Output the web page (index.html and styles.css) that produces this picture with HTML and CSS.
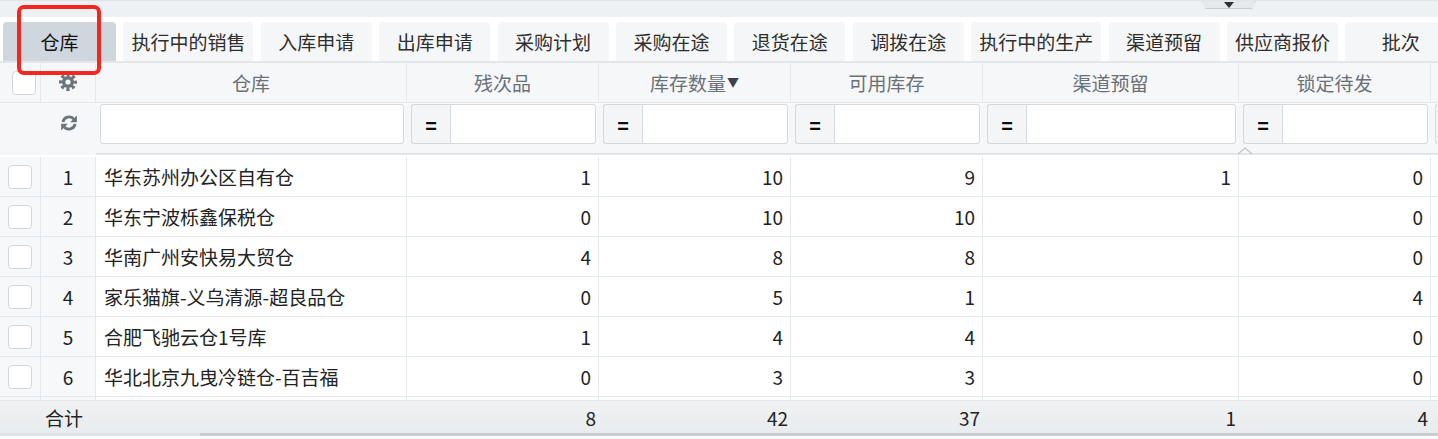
FILE: index.html
```html
<!DOCTYPE html>
<html lang="zh-CN">
<head>
    <meta charset="UTF-8">
    <meta name="viewport" content="width=device-width, initial-scale=1.0">
    <title>库存查询</title>
    <link rel="stylesheet" href="styles.css">
</head>
<body>
    <div class="topbar">
        <span class="drawer-handle">
            <svg width="10" height="6" viewBox="0 0 10 6"><path d="M0 0h10L5 6z" fill="#2b3036"/></svg>
        </span>
    </div>

    <div class="tabs">
        <div class="tab active">仓库</div>
        <div class="tab">执行中的销售</div>
        <div class="tab">入库申请</div>
        <div class="tab">出库申请</div>
        <div class="tab">采购计划</div>
        <div class="tab">采购在途</div>
        <div class="tab">退货在途</div>
        <div class="tab">调拨在途</div>
        <div class="tab">执行中的生产</div>
        <div class="tab">渠道预留</div>
        <div class="tab">供应商报价</div>
        <div class="tab">批次</div>
    </div>
    <!-- highlight box drawn over the first tab -->
    <div class="mark"></div>

    <div class="grid">
        <div class="row head">
            <div class="cell sel"><span class="check"></span></div>
            <div class="cell idx">
                <svg class="icon" width="18" height="18" viewBox="0 0 18 18">
                    <circle cx="9" cy="9" r="7.2" fill="none" stroke="#6b757d" stroke-width="3.6" stroke-dasharray="3.1 2.55" stroke-dashoffset="1.55"/>
                    <circle cx="9" cy="9" r="6.1" fill="#6b757d"/>
                    <circle cx="9" cy="9" r="2.6" fill="#f5f7f8"/>
                </svg>
            </div>
            <div class="cell">仓库</div>
            <div class="cell">残次品</div>
            <div class="cell">库存数量<span class="sort">▼</span></div>
            <div class="cell">可用库存</div>
            <div class="cell">渠道预留</div>
            <div class="cell">锁定待发</div>
            <div class="cell last"></div>
        </div>

        <div class="row filter">
            <div class="cell sel"></div>
            <div class="cell idx">
                <svg class="icon" width="18" height="18" viewBox="0 0 16 16">
                    <path d="M2.6 7.2A5.6 5.6 0 0 1 12.4 4.6" fill="none" stroke="#6b757d" stroke-width="2.6"/>
                    <path d="M15 1.4V7.4H9z" fill="#6b757d"/>
                    <path d="M13.4 8.8A5.6 5.6 0 0 1 3.6 11.4" fill="none" stroke="#6b757d" stroke-width="2.6"/>
                    <path d="M1 14.6V8.6H7z" fill="#6b757d"/>
                </svg>
            </div>
            <div class="cell"><input class="field solo" type="text"></div>
            <div class="cell"><div class="group"><span class="op">=</span><input class="field" type="text"></div></div>
            <div class="cell"><div class="group"><span class="op">=</span><input class="field" type="text"></div></div>
            <div class="cell"><div class="group"><span class="op">=</span><input class="field" type="text"></div></div>
            <div class="cell"><div class="group"><span class="op">=</span><input class="field" type="text"></div></div>
            <div class="cell"><div class="group"><span class="op">=</span><input class="field" type="text"></div></div>
            <div class="cell last"><div class="group"><span class="op"></span></div></div>
            <svg class="resize-tip" width="16" height="8" viewBox="0 0 16 8"><path d="M1 7L8 1l7 6" fill="none" stroke="#c5ccd2" stroke-width="1.5"/></svg>
        </div>

        <div class="body">
            <div class="row">
                <div class="cell sel"><span class="check"></span></div>
                <div class="cell idx">1</div>
                <div class="cell name">华东苏州办公区自有仓</div>
                <div class="cell num">1</div>
                <div class="cell num">10</div>
                <div class="cell num">9</div>
                <div class="cell num">1</div>
                <div class="cell num">0</div>
                <div class="cell last"></div>
            </div>
            <div class="row">
                <div class="cell sel"><span class="check"></span></div>
                <div class="cell idx">2</div>
                <div class="cell name">华东宁波栎鑫保税仓</div>
                <div class="cell num">0</div>
                <div class="cell num">10</div>
                <div class="cell num">10</div>
                <div class="cell num"></div>
                <div class="cell num">0</div>
                <div class="cell last"></div>
            </div>
            <div class="row">
                <div class="cell sel"><span class="check"></span></div>
                <div class="cell idx">3</div>
                <div class="cell name">华南广州安快易大贸仓</div>
                <div class="cell num">4</div>
                <div class="cell num">8</div>
                <div class="cell num">8</div>
                <div class="cell num"></div>
                <div class="cell num">0</div>
                <div class="cell last"></div>
            </div>
            <div class="row">
                <div class="cell sel"><span class="check"></span></div>
                <div class="cell idx">4</div>
                <div class="cell name">家乐猫旗-义乌清源-超良品仓</div>
                <div class="cell num">0</div>
                <div class="cell num">5</div>
                <div class="cell num">1</div>
                <div class="cell num"></div>
                <div class="cell num">4</div>
                <div class="cell last"></div>
            </div>
            <div class="row">
                <div class="cell sel"><span class="check"></span></div>
                <div class="cell idx">5</div>
                <div class="cell name">合肥飞驰云仓1号库</div>
                <div class="cell num">1</div>
                <div class="cell num">4</div>
                <div class="cell num">4</div>
                <div class="cell num"></div>
                <div class="cell num">0</div>
                <div class="cell last"></div>
            </div>
            <div class="row">
                <div class="cell sel"><span class="check"></span></div>
                <div class="cell idx">6</div>
                <div class="cell name">华北北京九曳冷链仓-百吉福</div>
                <div class="cell num">0</div>
                <div class="cell num">3</div>
                <div class="cell num">3</div>
                <div class="cell num"></div>
                <div class="cell num">0</div>
                <div class="cell last"></div>
            </div>
            <div class="row">
                <div class="cell sel"></div>
                <div class="cell idx"></div>
                <div class="cell name"></div>
                <div class="cell num"></div>
                <div class="cell num"></div>
                <div class="cell num"></div>
                <div class="cell num"></div>
                <div class="cell num"></div>
                <div class="cell last"></div>
            </div>
        </div>

        <div class="row foot">
            <div class="cell total">合计</div>
            <div class="cell"></div>
            <div class="cell num">8</div>
            <div class="cell num">42</div>
            <div class="cell num">37</div>
            <div class="cell num">1</div>
            <div class="cell num">4</div>
            <div class="cell last"></div>
        </div>
        <div class="hscroll"><div class="thumb"></div></div>
    </div>
</body>
</html>
```

FILE: styles.css
```css
body {
    margin: 0;
    font-family: "Noto Sans CJK SC", "Noto Sans", sans-serif;
    font-size: 19px;
    color: #222;
    background: #fff;
    overflow: hidden;
}

.topbar {
    position: relative;
    height: 16px;
    border-top: 1px solid #e1e5e8;
    background: #eef1f3;
}
.drawer-handle {
    position: absolute;
    left: 1202px;
    top: 0;
    width: 54px;
    height: 8px;
    background: #e6e9eb;
    border: 1px solid #c9ced2;
    border-top: none;
    clip-path: polygon(0 0, 100% 0, 93% 100%, 7% 100%);
    display: flex;
    justify-content: center;
    align-items: flex-start;
    padding-top: 1px;
    box-sizing: border-box;
}

.tabs {
    display: flex;
    gap: 7.4px;
    margin-top: 5px;
    padding-left: 3px;
    white-space: nowrap;
}
.tab {
    flex: none;
    min-width: 111px;
    height: 39px;
    line-height: 39px;
    padding: 0 8px;
    box-sizing: border-box;
    text-align: center;
    color: #2e2e2e;
    background: #f5f6f7;
    border-radius: 4px 4px 0 0;
}
.tab.active {
    min-width: 113px;
    background: #cfd6de;
    color: #111;
}
.mark {
    position: absolute;
    left: 17px;
    top: 5px;
    width: 84px;
    height: 70px;
    border: 4px solid #f5261f;
    border-radius: 7px;
    box-sizing: border-box;
}

.grid {
    border-top: 2px solid #e2e7eb;
}
.row {
    display: grid;
    grid-template-columns: 41px 55px 311px 192px 192px 192px 256px 192px 1fr;
    height: 40px;
}
.cell {
    border-right: 1px solid #e2e9ef;
    border-bottom: 1px solid #e2e9ef;
    box-sizing: border-box;
    display: flex;
    align-items: center;
    overflow: hidden;
    white-space: nowrap;
}
.cell.last {
    border-right: none;
}

.head {
    background: #f5f7f8;
    color: #6a7078;
}
.head .cell {
    justify-content: center;
}
.sort {
    font-size: 12px;
    color: #3a424c;
    margin-left: 1px;
    position: relative;
    top: -1px;
}
.check {
    width: 24px;
    height: 24px;
    box-sizing: border-box;
    border: 1px solid #d0d6db;
    border-radius: 4px;
    background: #fff;
}
.sel {
    padding-left: 8px;
}

.filter {
    position: relative;
    height: 52px;
    background: #f5f7f8;
}
.filter .cell {
    border-right: none;
    border-bottom: 2px solid #dfe5e9;
    padding: 0 3px 0 4px;
    align-items: flex-start;
    padding-top: 1px;
}
.filter .cell.sel,
.filter .cell.idx {
    border-bottom-color: #f5f7f8;
}
.filter .cell.idx {
    padding: 0;
    align-items: center;
    justify-content: center;
    padding-bottom: 10px;
}
.head .cell.idx .icon {
    margin-top: -1px;
}
.field {
    flex: 1;
    min-width: 0;
    height: 40px;
    margin: 0;
    padding: 0 8px;
    box-sizing: border-box;
    border: 1px solid #d3d9dd;
    border-radius: 0 3px 3px 0;
    background: #fff;
    font: inherit;
    outline: none;
}
.field.solo {
    border-radius: 3px;
}
.group {
    flex: 1;
    display: flex;
    min-width: 0;
}
.op {
    flex: none;
    width: 39px;
    height: 40px;
    box-sizing: border-box;
    border: 1px solid #d3d9dd;
    border-right: none;
    border-radius: 3px 0 0 3px;
    background: #f3f5f6;
    display: flex;
    align-items: center;
    justify-content: center;
    font-family: "Liberation Sans", sans-serif;
    font-weight: bold;
    font-size: 20px;
    color: #111;
    padding-top: 4px;
}
.resize-tip {
    position: absolute;
    left: 1237px;
    top: 44px;
}

.body {
    height: 243px;
    margin-top: 2px;
    overflow: hidden;
}
.body .sel,
.body .idx {
    background: #f6f8f9;
}
.body .idx {
    justify-content: center;
}
.name {
    padding-left: 8px;
}
.num {
    justify-content: flex-end;
    padding-right: 7px;
}

.foot {
    height: 33px;
    background: linear-gradient(#eff1f2, #e9ecee);
    border-top: 1px solid #e4e8eb;
    box-sizing: border-box;
}
.foot .cell {
    border: none;
}
.foot .num {
    padding-right: 3px;
}
.foot .total {
    grid-column: span 2;
    padding-left: 45px;
}
.hscroll {
    height: 3px;
    background: #dfe3e6;
}
.thumb {
    margin-left: 200px;
    height: 3px;
    background: #c6cbd0;
}
```
